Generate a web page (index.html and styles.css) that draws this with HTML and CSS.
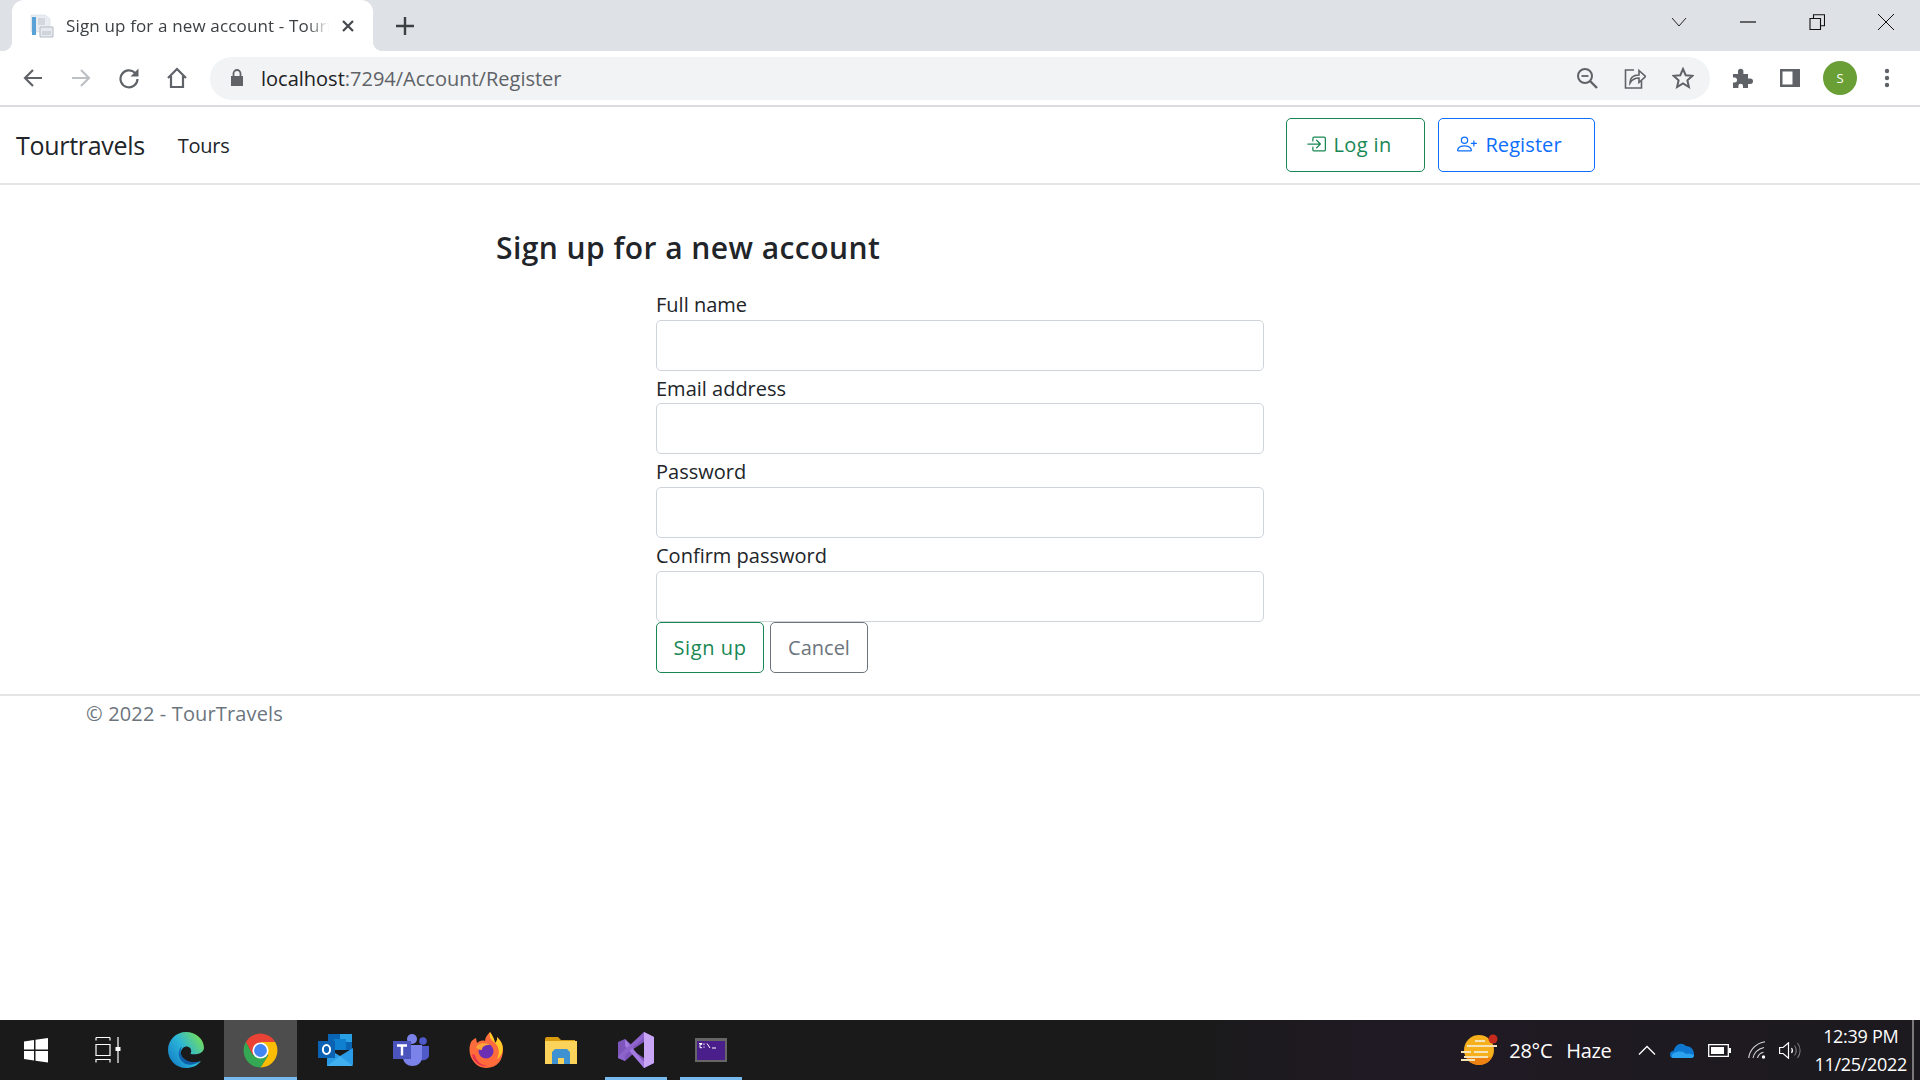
FILE: index.html
```html
<!DOCTYPE html>
<html lang="en">
<head>
  <meta charset="UTF-8">
  <title>Sign up for a new account - Tourtravels</title>
  <link rel="stylesheet" href="styles.css">
</head>
<body>
  <div class="screen">
    <div class="tabstrip">
      <div class="tab">
        <svg class="favicon" width="24" height="24" viewBox="0 0 24 24"><path d="M1 1h14l5 4v13H1z" fill="#e9edf2" stroke="#d5dae0" stroke-width=".6"/><path d="M2 3h4v18H2z" fill="#58a2d8"/><path d="M8 4h7v7H8z" fill="#d3d8de"/><path d="M10 13h13v10H10z" fill="#e6e9ed" stroke="#b4bbc3"/><path d="M12 17h9v4h-9z" fill="#cfd5db"/></svg>
        <span class="tab-title">Sign up for a new account - Tourtravels</span>
        <svg class="tab-close" width="14" height="14" viewBox="0 0 14 14"><path d="M2 2l10 10M12 2L2 12" stroke="#45484c" stroke-width="2.200"/></svg>
      </div>
      <svg class="new-tab" width="20" height="20" viewBox="0 0 20 20"><path d="M10 1v18M1 10h18" stroke="#3c4043" stroke-width="2.400"/></svg>
      <div class="window-btns">
        <svg width="16" height="16" viewBox="0 0 16 16"><path d="M1 4l7 8 7-8" fill="none" stroke="#222" stroke-width="1"/></svg>
        <svg width="16" height="16" viewBox="0 0 16 16"><path d="M0 8h16" stroke="#111" stroke-width="1.200"/></svg>
        <svg width="16" height="16" viewBox="0 0 16 16"><path d="M1 4.500h10.500v11H1zM4.500 4V.8h11v11H12" fill="none" stroke="#111" stroke-width="1.100"/></svg>
        <svg width="16" height="16" viewBox="0 0 16 16"><path d="M0 0l16 16M16 0L0 16" stroke="#111" stroke-width="1"/></svg>
      </div>
    </div>

    <div class="toolbar">
      <svg class="tool" width="22" height="22" viewBox="0 0 22 22"><path d="M20 11H3M11 3l-8 8 8 8" fill="none" stroke="#5f6368" stroke-width="2.200"/></svg>
      <svg class="tool" width="22" height="22" viewBox="0 0 22 22"><path d="M2 11h17M11 3l8 8-8 8" fill="none" stroke="#bdc1c6" stroke-width="2.200"/></svg>
      <svg class="tool" width="22" height="22" viewBox="0 0 22 22"><path d="M19.500 12a8.500 8.500 0 1 1-2.600-6.300" fill="none" stroke="#5f6368" stroke-width="2.200"/><path d="M20.500 1.500v8h-8z" fill="#5f6368"/></svg>
      <svg class="tool" width="22" height="22" viewBox="0 0 22 22"><path d="M2 11l9-9 9 9M5 9v11h12V9" fill="none" stroke="#5f6368" stroke-width="2.200"/></svg>
      <div class="omnibox">
        <svg class="lock" width="14" height="18" viewBox="0 0 14 18"><path d="M1 7h12v10H1z" fill="#5f6368"/><path d="M3.500 7V4.500a3.500 3.500 0 0 1 7 0V7" fill="none" stroke="#5f6368" stroke-width="1.800"/></svg>
        <span class="url"><span class="url-host">localhost</span>:7294/Account/Register</span>
        <div class="omni-icons">
          <svg width="22" height="22" viewBox="0 0 22 22"><circle cx="9" cy="9" r="7" fill="none" stroke="#5f6368" stroke-width="2"/><path d="M14 14l7 7" stroke="#5f6368" stroke-width="2.400"/><path d="M5.500 9h7" stroke="#5f6368" stroke-width="1.800"/></svg>
          <svg width="22" height="22" viewBox="0 0 22 22"><path d="M10 3H1.500v18h16v-7" fill="none" stroke="#5f6368" stroke-width="1.600"/><path d="M6 16c0-6 4-8 9-8V3.500l6.500 6-6.500 6V11c-4 0-7 1.500-9 5z" fill="none" stroke="#5f6368" stroke-width="1.600"/></svg>
          <svg width="22" height="22" viewBox="0 0 22 22"><path d="M11 2l2.700 6.200 6.800.6-5.100 4.500 1.500 6.700L11 16.500 5.100 20l1.500-6.700L1.500 8.800l6.800-.6z" fill="none" stroke="#5f6368" stroke-width="2"/></svg>
        </div>
      </div>
      <div class="toolbar-right">
        <svg width="22" height="22" viewBox="0 0 22 22"><path d="M2 7h5V4.500a2.700 2.700 0 0 1 5.400 0V7H17v4.500h2.300a2.700 2.700 0 0 1 0 5.400H17V21h-5v-2a2.300 2.300 0 0 0-4.600 0v2H2v-5.500h1.500a2.500 2.500 0 0 0 0-5H2z" fill="#5f6368"/></svg>
        <svg width="22" height="22" viewBox="0 0 22 22"><path fill-rule="evenodd" d="M1 2h20v18H1zM3.500 4.500v13h10v-13z" fill="#5f6368"/></svg>
        <span class="avatar">S</span>
        <svg width="6" height="22" viewBox="0 0 6 22"><circle cx="3" cy="4" r="2.200" fill="#5f6368"/><circle cx="3" cy="11" r="2.200" fill="#5f6368"/><circle cx="3" cy="18" r="2.200" fill="#5f6368"/></svg>
      </div>
    </div>

    <main class="page">
      <nav class="navbar">
        <a class="brand">Tourtravels</a>
        <a class="nav-link">Tours</a>
        <div class="nav-actions">
          <a class="btn btn-success btn-login">
            <svg width="20" height="20" viewBox="0 0 16 16" fill="currentColor"><path fill-rule="evenodd" d="M6 3.500a.5.500 0 0 1 .5-.5h8a.5.500 0 0 1 .5.500v9a.5.500 0 0 1-.5.500h-8a.5.500 0 0 1-.5-.5v-2a.5.500 0 0 0-1 0v2A1.500 1.500 0 0 0 6.500 14h8a1.500 1.500 0 0 0 1.500-1.500v-9A1.500 1.500 0 0 0 14.500 2h-8A1.500 1.500 0 0 0 5 3.500v2a.5.500 0 0 0 1 0v-2z"/><path fill-rule="evenodd" d="M11.854 8.354a.5.500 0 0 0 0-.708l-3-3a.5.500 0 1 0-.708.708L10.293 7.500H1.500a.5.500 0 0 0 0 1h8.793l-2.147 2.146a.5.500 0 0 0 .708.708l3-3z"/></svg>
            Log in
          </a>
          <a class="btn btn-primary btn-register">
            <svg width="20" height="20" viewBox="0 0 16 16" fill="currentColor"><path d="M6 8a3 3 0 1 0 0-6 3 3 0 0 0 0 6zm2-3a2 2 0 1 1-4 0 2 2 0 0 1 4 0zm4 8c0 1-1 1-1 1H1s-1 0-1-1 1-4 6-4 6 3 6 4zm-1-.004c-.001-.246-.154-.986-.832-1.664C9.516 10.680 8.289 10 6 10c-2.290 0-3.516.680-4.168 1.332-.678.678-.83 1.418-.832 1.664h10z"/><path fill-rule="evenodd" d="M13.500 5a.5.500 0 0 1 .5.500V7h1.500a.5.500 0 0 1 0 1H14v1.500a.5.500 0 0 1-1 0V8h-1.500a.5.500 0 0 1 0-1H13V5.500a.5.500 0 0 1 .5-.5z"/></svg>
            Register
          </a>
        </div>
      </nav>

      <section class="content">
        <h1 class="page-title">Sign up for a new account</h1>
        <form class="signup">
          <label class="field-label">Full name</label>
          <input class="form-control" type="text">
          <label class="field-label">Email address</label>
          <input class="form-control" type="text">
          <label class="field-label">Password</label>
          <input class="form-control" type="password">
          <label class="field-label">Confirm password</label>
          <input class="form-control" type="password">
          <div class="form-actions">
            <a class="btn btn-success btn-signup">Sign up</a>
            <a class="btn btn-secondary btn-cancel">Cancel</a>
          </div>
        </form>
      </section>

      <footer class="footer">© 2022 - TourTravels</footer>
    </main>

    <div class="taskbar">
      <div class="task-left">
        <span class="task-item task-start"><svg width="26" height="26" viewBox="0 0 26 26"><path d="M1 4.500l10-1.500v9.500H1zM12.500 2.800L25 1v11.500H12.500zM1 14h10v9.500L1 22zM12.500 14H25v11.500l-12.500-1.800z" fill="#fff"/></svg></span>
        <span class="task-item task-view"><svg width="28" height="26" viewBox="0 0 28 26"><path d="M2 .5h14M2 .5v3M16 .5v3M2 7.500h14v11H2zM2 25.500v-3h14v3M24 0v26" fill="none" stroke="#fff" stroke-width="1.200"/><path d="M21.500 10h5v4h-5z" fill="#fff"/></svg></span>
        <span class="task-item">
          <svg width="36" height="36" viewBox="0 0 36 36">
            <defs>
              <linearGradient id="edgeTop" x1="0" y1="1" x2="1" y2=".3"><stop offset="0" stop-color="#0d74c4"/><stop offset=".55" stop-color="#2cb5d8"/><stop offset="1" stop-color="#6fdc62"/></linearGradient>
            </defs>
            <path d="M18 0C8 0 0 8 0 18c0 10 8 18 18 18 6 0 11-2 15-7-4 2-11 3-15 0-5-3-7-9-3-13 2-2 5-2 7 0 2 2 1 5 .5 6 5 1 13 0 13.500-6C36 7 28 0 18 0z" fill="url(#edgeTop)"/>
            <path d="M14 14c-5 5-4 13 2 17 3 2 9 3 17-2-4 1-11 2-15-1-5-3-7-8-4-14z" fill="#0f5ea8"/>
          </svg>
        </span>
        <span class="task-item task-active">
          <svg width="37" height="37" viewBox="0 0 48 48"><path d="M5 13A22 22 0 0 1 43 13H24L14 30z" fill="#ea4335"/><path d="M43 13A22 22 0 0 1 24 46L34 30 24 13z" fill="#fbbc04"/><path d="M5 13L14 30 34 30 24 46A22 22 0 0 1 5 13z" fill="#34a853"/><circle cx="24" cy="24" r="10.500" fill="#fff"/><circle cx="24" cy="24" r="8.300" fill="#4285f4"/></svg>
        </span>
        <span class="task-item">
          <svg width="35" height="32" viewBox="0 0 35 32"><path d="M10 0h24v16H10z" fill="#0a64b4"/><path d="M22 0h12v8H22z" fill="#29a0e3"/><path d="M16 5h12v11H16z" fill="#0f7fd0"/><path d="M9 14l13 8 13-8v16a2 2 0 0 1-2 2H9z" fill="#2a9be6"/><path d="M9 32l13-10 13 10z" fill="#40b0f0"/><path d="M0 7h17v17H0z" fill="#0c62b2"/><ellipse cx="8.500" cy="15.500" rx="3.600" ry="4.400" fill="none" stroke="#fff" stroke-width="2"/></svg>
        </span>
        <span class="task-item">
          <svg width="36" height="32" viewBox="0 0 36 32"><circle cx="19" cy="5" r="5" fill="#7b83eb"/><circle cx="30" cy="7" r="3.800" fill="#5059c9"/><path d="M26 12h10v9c0 4-4 6-10 5z" fill="#5059c9"/><path d="M10 11h19v12c0 12-19 12-19 0z" fill="#7b83eb"/><path d="M0 7h18v18H0z" fill="#4b53bc"/><path d="M4 11.500h10M9 11.500v10" stroke="#fff" stroke-width="2.400"/></svg>
        </span>
        <span class="task-item">
          <svg width="34" height="36" viewBox="0 0 34 36"><path d="M2 10c-5 12 3 26 15 26s17-9 17-18c0-6-3-10-6-13 .5 3-.5 5-2 6-1-5-3-8-5-11-3 3-5 6-5 9-3-1-6 0-8 2l-1-5c-2 1-4 2-5 4z" fill="#ff6b3a"/><path d="M21 0c-2 6 3 9 6 12 3 4 4 9 1 15 5-3 7-10 5-15-1-3-3-5-5-7 .5 3-.5 5-2 6-1-5-3-8-5-11z" fill="#ffc928"/><circle cx="17" cy="19" r="7.500" fill="#6b2fb3"/><path d="M7 15c3-5 11-5 14-2-6 0-8 2-8 5-3 0-5-1-6-3z" fill="#ffa436"/><path d="M3 22c1 8 8 13 16 12-7-1-12-5-13-11z" fill="#e8304f"/></svg>
        </span>
        <span class="task-item">
          <svg width="32" height="27" viewBox="0 0 32 27"><path d="M0 2a2 2 0 0 1 2-2h11l3 3h14v5H0z" fill="#d89b0e"/><path d="M0 4h32v23H0z" fill="#fcd35a"/><path d="M7 27V15l3-3h12l3 3v12h-6v-6h-6v6z" fill="#3f92d2"/></svg>
        </span>
        <span class="task-item task-underline">
          <svg width="36" height="36" viewBox="0 0 36 36"><path d="M0 10l7-3 9 8 10-15 10 5v26l-10 5-10-15-9 8-7-3z" fill="#7e55bb"/><path d="M26 0l10 5v26l-10 5z" fill="#c9a6f5"/><path d="M26 10L14 18l12 8z" fill="#1a1a1a"/><path d="M7 7l19 23v6L7 14z" fill="#a27ae0"/><path d="M26 0v6L7 23l0 6-7-3 0-2z" fill="#8d63cc"/></svg>
        </span>
        <span class="task-item task-underline">
          <svg width="32" height="24" viewBox="0 0 32 24"><path d="M0 0h32v24H0z" fill="#666"/><path d="M2 3h28v19H2z" fill="#4a1f8c"/><path d="M4 5.500h3v.8H5v3.400h2M9 5.500v1.500M9 8.500v1.200M12 5.500l3 4.500M17 10h4" fill="none" stroke="#fff" stroke-width="1"/></svg>
        </span>
      </div>
      <div class="tray">
        <svg class="tray-weather" width="37" height="37" viewBox="0 0 37 37"><circle cx="18" cy="18" r="15" fill="#f6b01e"/><path d="M18 33a15 15 0 0 0 13-7.500H5A15 15 0 0 0 18 33z" fill="#ed8112"/><path d="M14 9h10M6 14h30M13 20h14M0 20h10M3 25h24M0 28h14" stroke="#f4e4b8" stroke-width="2"/><circle cx="32" cy="7" r="4.500" fill="#c42b1c"/></svg>
        <span class="tray-temp">28°C</span>
        <span class="tray-haze">Haze</span>
        <svg class="tray-chevron" width="18" height="10" viewBox="0 0 18 10"><path d="M1 9.500l8-8 8 8" fill="none" stroke="#fff" stroke-width="1.300"/></svg>
        <svg class="tray-cloud" width="24" height="15" viewBox="0 0 24 15"><path d="M3.500 15a3.500 3.500 0 0 1 0-7C5 2 11-2 16 3c5 0 8 4 8 8 0 3-1 4-3 4z" fill="#0e78d0"/><path d="M3.500 15c-3 0-3-5 3.500-6 5-1 7 0 9 2 4-1 8 1 8 1 0 2-1 3-3 3z" fill="#2ba3ef"/></svg>
        <svg class="tray-battery" width="23" height="13" viewBox="0 0 23 13"><path d="M.7.700h19.600v11.600H.7z" fill="none" stroke="#fff" stroke-width="1.300"/><path d="M3 3h13v7H3z" fill="#fff"/><path d="M21 4h2v5h-2z" fill="#fff"/></svg>
        <svg class="tray-wifi" width="18" height="18" viewBox="0 0 18 18"><path d="M.7 17C1.500 9 8 2 17 .7M5 17c1-5 5-9 11-10.500M9.500 17c.7-3 3-5 6-5.700" fill="none" stroke="#d8d8d8" stroke-width="1.100"/><circle cx="15.500" cy="16" r="1.700" fill="#fff"/></svg>
        <svg class="tray-volume" width="22" height="17" viewBox="0 0 22 17"><path d="M.6 5.500h3.500L9.500.8v15.400L4.100 11.500H.6z" fill="none" stroke="#fff" stroke-width="1.200"/><path d="M12.500 6c1.300 1.700 1.300 3.300 0 5" fill="none" stroke="#fff" stroke-width="1.200"/><path d="M15.500 3.500c2.300 3.300 2.300 6.700 0 10M18.500 1c3.500 4.500 3.500 10.500 0 15" fill="none" stroke="#777" stroke-width="1.100"/></svg>
        <div class="clock"><span>12:39 PM</span><span>11/25/2022</span></div>
        <span class="show-desktop"></span>
      </div>
    </div>
  </div>
</body>
</html>
```

FILE: styles.css
```css
* {
  box-sizing: border-box;
}

body {
  margin: 0;
  background: #fff;
  font-family: "Open Sans", "Noto Sans", sans-serif;
  color: #212529;
}

.screen {
  width: 1920px;
  height: 1080px;
  display: flex;
  flex-direction: column;
  overflow: hidden;
}

/* browser chrome */
.tabstrip {
  height: 51px;
  flex: none;
  background: #dee1e6;
  display: flex;
  align-items: flex-start;
  padding-left: 12px;
}

.tab {
  position: relative;
  width: 361px;
  height: 51px;
  background: #fff;
  border-radius: 12px 12px 0 0;
  display: flex;
  align-items: center;
  padding: 0 18px;
  font-size: 17px;
  color: #3c4043;
}

.tab::before,
.tab::after {
  content: "";
  position: absolute;
  bottom: 0;
  width: 10px;
  height: 10px;
}

.tab::before {
  left: -10px;
  background: radial-gradient(circle at 0 0, transparent 10px, #fff 10.500px);
}

.tab::after {
  right: -10px;
  background: radial-gradient(circle at 100% 0, transparent 10px, #fff 10.500px);
}

.favicon {
  flex: none;
  margin-right: 12px;
}

.tab-title {
  flex: 1;
  overflow: hidden;
  white-space: nowrap;
  letter-spacing: 0.15px;
  -webkit-mask-image: linear-gradient(to right, #000 calc(100% - 22px), transparent);
  mask-image: linear-gradient(to right, #000 calc(100% - 22px), transparent);
}

.tab-close {
  flex: none;
  margin-left: 12px;
}

.new-tab {
  margin: 16px 0 0 22px;
}

.window-btns {
  margin-left: auto;
  display: flex;
  align-items: center;
  gap: 53px;
  height: 43px;
  padding-right: 26px;
}

.toolbar {
  height: 56px;
  flex: none;
  background: #fff;
  border-bottom: 2px solid #dadce0;
  display: flex;
  align-items: center;
  padding-left: 22px;
}

.tool {
  margin-right: 26px;
}

.omnibox {
  width: 1500px;
  height: 43px;
  margin-left: -4px;
  background: #f1f3f4;
  border-radius: 22px;
  display: flex;
  align-items: center;
  padding: 0 16px 0 20px;
}

.lock {
  margin-right: 17px;
}

.url {
  font-size: 20px;
  color: #5f6368;
}

.url-host {
  color: #202124;
}

.omni-icons {
  margin-left: auto;
  display: flex;
  gap: 26px;
}

.toolbar-right {
  display: flex;
  align-items: center;
  margin-left: 21px;
  gap: 26px;
}

.avatar {
  width: 34px;
  height: 34px;
  margin: 0 1px 0 -4px;
  border-radius: 50%;
  background: #6a9f35;
  color: #fff;
  font-size: 13px;
  display: flex;
  align-items: center;
  justify-content: center;
}

/* the page itself */
.page {
  flex: 1;
  display: flex;
  flex-direction: column;
  font-size: 20px;
}

.navbar {
  height: 78px;
  flex: none;
  border-bottom: 2px solid #e3e5e7;
  display: flex;
  align-items: center;
  padding-left: 16px;
}

.brand {
  font-size: 25px;
  color: #212529;
  letter-spacing: -0.3px;
}

.nav-link {
  margin-left: 33px;
  color: #212529;
  letter-spacing: -0.3px;
}

.nav-actions {
  margin-left: 1057px;
  display: flex;
  gap: 13px;
}

.btn {
  display: inline-flex;
  align-items: center;
  height: 51px;
  border: 1px solid;
  border-radius: 5px;
  background: #fff;
}

.btn-success {
  color: #198754;
  border-color: #198754;
}

.btn-primary {
  color: #0d6efd;
  border-color: #0d6efd;
}

.btn-secondary {
  color: #6c757d;
  border-color: #6c757d;
}

.btn-login {
  width: 139px;
  height: 54px;
  padding: 0 0 2px 19px;
  gap: 7px;
  letter-spacing: 0.4px;
}

.btn-register {
  width: 157px;
  height: 54px;
  padding: 0 0 2px 18px;
  gap: 8px;
  letter-spacing: 0.1px;
}

.content {
  padding-left: 496px;
  height: 511px;
  flex: none;
  border-bottom: 2px solid #e3e5e7;
}

.page-title {
  margin: 0;
  padding-top: 43px;
  font-size: 30px;
  line-height: 40px;
  font-weight: 600;
  letter-spacing: 0.45px;
}

.signup {
  width: 608px;
  margin: 19px 0 0 160px;
  display: flex;
  flex-direction: column;
}

.field-label {
  height: 32.7px;
  line-height: 36px;
}

.form-control {
  height: 51px;
  border: 1px solid #ced4da;
  border-radius: 5px;
  background: #fff;
}

.form-actions {
  display: flex;
  gap: 6px;
}

.btn-signup {
  width: 108px;
  justify-content: center;
  letter-spacing: 0.6px;
}

.btn-cancel {
  width: 98px;
  justify-content: center;
}

.footer {
  padding: 4px 0 0 86px;
  color: #6c757d;
  letter-spacing: 0.15px;
}

/* windows taskbar */
.taskbar {
  height: 60px;
  flex: none;
  background: linear-gradient(90deg, #1a1a1a 62%, #201a24 72%, #1c1a1e 100%);
  display: flex;
  align-items: stretch;
  justify-content: space-between;
  color: #fff;
}

.task-left {
  display: flex;
  padding-left: 5px;
}

.task-item {
  width: 62px;
  height: 60px;
  margin-right: 13.2px;
  display: flex;
  align-items: center;
  justify-content: center;
}

.task-start {
  margin-right: 10px;
}

.task-view {
  margin-right: 16px;
}

.task-active {
  width: 73px;
  margin: 0 7.2px 0 -6px;
  background: #4d4d4d;
  box-shadow: inset 0 -3px 0 #76b9ed;
}

.task-underline {
  box-shadow: inset 0 -3px 0 #76b9ed;
}

.tray {
  display: flex;
  align-items: center;
  font-size: 20px;
}

.tray-weather {
  margin-right: 11px;
}

.tray-temp,
.tray-haze {
  letter-spacing: -0.3px;
}

.tray-haze {
  margin: 0 27px 0 14px;
}

.tray-chevron,
.tray-cloud {
  margin-right: 14px;
}

.tray-battery {
  margin-right: 17px;
}

.tray-wifi,
.tray-volume {
  margin-right: 13px;
}

.clock {
  display: flex;
  flex-direction: column;
  align-items: center;
  font-size: 18px;
  line-height: 28px;
  letter-spacing: -0.3px;
}

.show-desktop {
  width: 8px;
  height: 60px;
  margin-left: 5px;
  border-left: 2px solid #7a7a7a;
}
```
